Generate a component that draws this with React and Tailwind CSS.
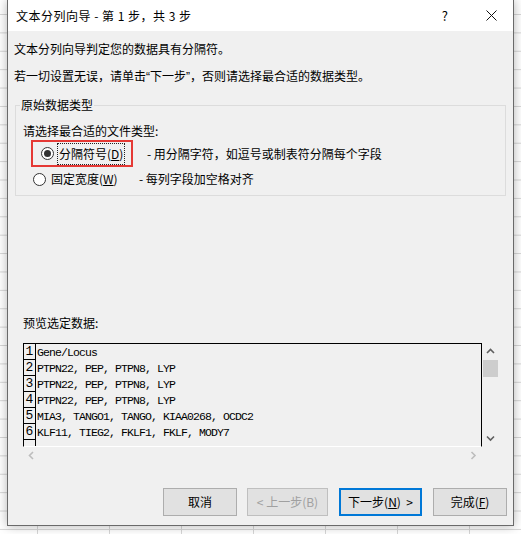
import React from "react";

const ui = "font-['Noto_Sans_CJK_SC','Noto_Sans',sans-serif]";
const mono = "font-['Liberation_Mono','DejaVu_Sans_Mono',monospace]";
const latin = "font-['Liberation_Sans',sans-serif]";

const rows = [
  "Gene/Locus",
  "PTPN22, PEP, PTPN8, LYP",
  "PTPN22, PEP, PTPN8, LYP",
  "PTPN22, PEP, PTPN8, LYP",
  "MIA3, TANGO1, TANGO, KIAA0268, OCDC2",
  "KLF11, TIEG2, FKLF1, FKLF, MODY7",
];

const Chevron = ({ dir, color }) => {
  const d = {
    up: "M1 5 L4.5 1.5 L8 5",
    down: "M1 1.5 L4.5 5 L8 1.5",
    left: "M5 1 L1.5 4.5 L5 8",
    right: "M1.5 1 L5 4.5 L1.5 8",
  }[dir];
  const vertical = dir === "up" || dir === "down";
  return (
    <svg
      width={vertical ? 9 : 7}
      height={vertical ? 7 : 9}
      viewBox={vertical ? "0 0 9 7" : "0 0 7 9"}
      fill="none"
    >
      <path d={d} stroke={color} strokeWidth="1.6" />
    </svg>
  );
};

const Radio = ({ checked }) => (
  <span className="w-[13px] h-[13px] rounded-full border border-[#333] bg-white flex items-center justify-center shrink-0">
    {checked && <span className="w-[7px] h-[7px] rounded-full bg-[#333]"></span>}
  </span>
);

const Button = ({ children, width, disabled, primary }) => (
  <div
    className={`h-[28px] flex items-center justify-center text-[12px] whitespace-nowrap bg-[#e1e1e1] ${
      primary
        ? "border-2 border-[#0078d7]"
        : disabled
        ? "border border-[#bfbfbf] text-[#a0a0a0]"
        : "border border-[#adadad]"
    } ${width}`}
  >
    {children}
  </div>
);

export default function App() {
  return (
    <div
      className={`w-[521px] h-[534px] overflow-hidden bg-white bg-[linear-gradient(to_right,#d6d6d6_1px,transparent_1px),linear-gradient(to_bottom,#d6d6d6_1px,transparent_1px)] bg-[length:72px_18.4px] bg-[position:37px_14px] pl-[7px] ${ui} text-black`}
    >
      <div className="w-[507px] h-[526px] border-x border-b border-[#6a6a6a] bg-[#f0f0f0] shadow-[0_0_10px_rgba(0,0,0,0.3)] flex flex-col">
        {/* title bar */}
        <div className="h-[31px] bg-white flex items-center pl-[8px] shrink-0">
          <span className="text-[12px] leading-[18px] whitespace-pre tracking-[0.5px]">
            文本分列向导 - 第 1 步，共 3 步
          </span>
          <span className="ml-auto text-[13px] leading-[18px] mr-[38px]">?</span>
          <svg width="11" height="11" viewBox="0 0 11 11" className="mr-[16px]">
            <path d="M0.5 0.5 L10.5 10.5 M10.5 0.5 L0.5 10.5" stroke="#111" strokeWidth="1" />
          </svg>
        </div>

        <div className="pl-[6px] text-[12px] leading-[18px] mt-[9px]">
          文本分列向导判定您的数据具有分隔符。
        </div>
        <div className="pl-[6px] text-[12px] leading-[18px] mt-[9px] whitespace-nowrap">
          若一切设置无误，请单击<span className={latin}>“</span>下一步<span className={latin}>”</span>，否则请选择最合适的数据类型。
        </div>

        {/* group box */}
        <div className="relative mt-[19px] ml-[7px] mr-[7px] border border-[#dcdcdc] pt-[16px] pb-[7px] pl-[7px]">
          <span className="absolute left-[4px] top-[-10px] bg-[#f0f0f0] px-[1px] text-[12px] leading-[18px]">
            原始数据类型
          </span>
          <div className="text-[12px] leading-[18px]">请选择最合适的文件类型:</div>

          <div className="flex items-center text-[12px] ml-[8px] whitespace-nowrap">
            <div className="flex items-center border-2 border-[#e53935] h-[27px] pl-[8px] pr-[6px]">
              <Radio checked />
              <span className="ml-[3px] w-[68px] h-[22px] leading-[20px] border border-dotted border-[#222] pl-[1px]">
                分隔符号(<u>D</u>)
              </span>
            </div>
            <span className="ml-[14px] leading-[18px]">- 用分隔字符，如逗号或制表符分隔每个字段</span>
          </div>

          <div className="flex items-center text-[12px] leading-[18px] ml-[10px] mt-[3px] whitespace-nowrap">
            <Radio />
            <span className="ml-[4px] w-[67px] shrink-0 pl-[1px]">
              固定宽度(<u>W</u>)
            </span>
            <span className="ml-[22px]">- 每列字段加空格对齐</span>
          </div>
        </div>

        <div className="ml-[15px] mt-[118px] text-[12px] leading-[18px]">预览选定数据:</div>

        {/* preview */}
        <div className="ml-[15px] mt-[11px] flex">
          <div className="w-[459px] h-[104px] border-t border-x border-black border-b border-b-white overflow-hidden">
            {[...rows, ""].map((r, i) => (
              <div key={i} className="flex h-[16px]">
                <div
                  className={`w-[12px] shrink-0 border-r border-b border-black text-[13px] leading-[14px] flex items-end justify-center ${mono}`}
                >
                  {i < 6 ? i + 1 : ""}
                </div>
                <div className={`pl-[1px] text-[11.5px] tracking-[-0.9px] leading-[17px] whitespace-pre text-black ${mono}`}>
                  {r}
                </div>
              </div>
            ))}
          </div>
          <div className="w-[17px] h-[104px] flex flex-col items-center">
            <div className="h-[17px] flex items-center justify-center">
              <Chevron dir="up" color="#606060" />
            </div>
            <div className="w-[15px] h-[17px] bg-[#cdcdcd]"></div>
            <div className="mt-auto h-[17px] flex items-center justify-center">
              <Chevron dir="down" color="#606060" />
            </div>
          </div>
        </div>
        <div className="ml-[15px] w-[459px] h-[16px] flex items-center justify-between px-[5px]">
          <Chevron dir="left" color="#bdbdbd" />
          <Chevron dir="right" color="#bdbdbd" />
        </div>

        {/* buttons */}
        <div className="mt-[25px] flex justify-end pr-[6px] gap-[10px]">
          <Button width="w-[74px]">取消</Button>
          <Button width="w-[81px]" disabled>
            &lt; 上一步(B)
          </Button>
          <Button width="w-[83px] ml-[1px]" primary>
            下一步(<u>N</u>)&nbsp;&nbsp;&gt;
          </Button>
          <Button width="w-[74px] ml-[1px]">
            完成(<u>F</u>)
          </Button>
        </div>
      </div>
    </div>
  );
}
